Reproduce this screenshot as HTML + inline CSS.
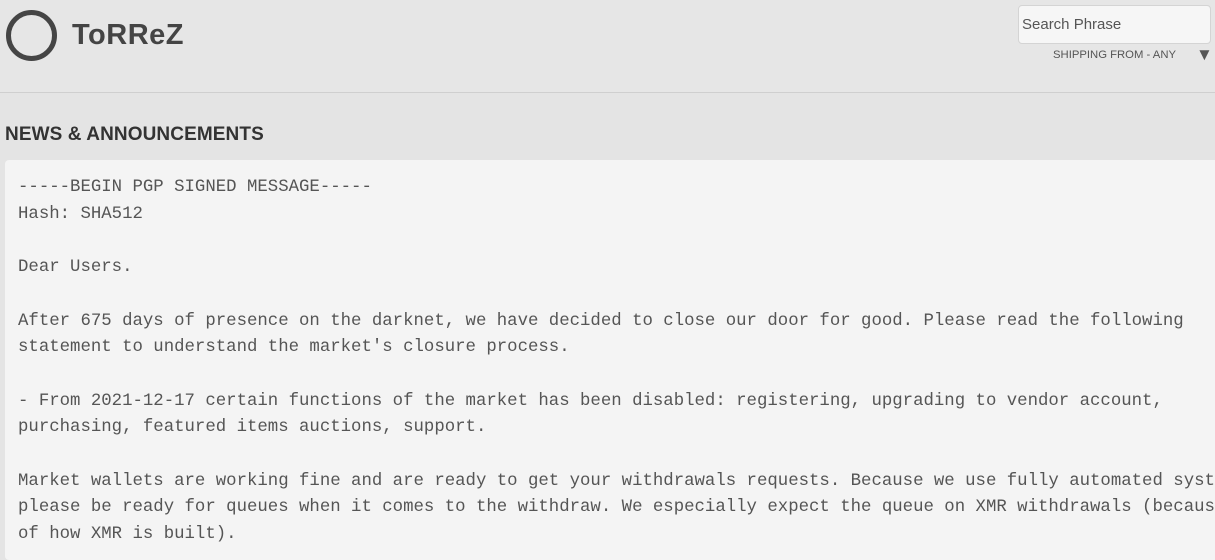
<!DOCTYPE html>
<html><head><style>
body{margin:0;width:1215px;height:548px;overflow:hidden;background:#e4e4e4;font-family:"Liberation Sans",sans-serif;position:relative}
.hdr{position:absolute;left:0;top:0;width:1215px;height:92px;background:#e6e6e6;border-bottom:1px solid #cfcfcf}
.logo{position:absolute;left:6px;top:10px;width:41px;height:41px;border:5px solid #454545;border-radius:50%}
.name{position:absolute;left:72px;top:19px;font-size:29px;color:#444;font-weight:bold;letter-spacing:0.5px}
.search{position:absolute;left:1018px;top:5px;width:193px;height:39px;background:#f6f6f6;border:1px solid #d4d4d4;border-radius:4px;font-size:15px;color:#555;line-height:38px;padding-left:3px;box-sizing:border-box}
.ship{position:absolute;left:1053px;top:49px;font-size:11.3px;color:#555}
.tri{position:absolute;left:1196px;top:45px;font-size:17px;color:#555}
h1{position:absolute;left:5px;top:124px;margin:0;font-size:19px;font-weight:bold;color:#333;letter-spacing:0.1px}
.box{position:absolute;left:5px;top:160px;width:1215px;height:400px;background:#f4f4f4;border-radius:4px}
pre{position:absolute;left:18px;top:175px;margin:0;font-family:"Liberation Mono",monospace;font-size:17.35px;line-height:26.7px;color:#555}
</style></head><body>
<div class="hdr"><div class="logo"></div><div class="name">ToRReZ</div>
<div class="search">Search Phrase</div><div class="ship">SHIPPING FROM - ANY</div><div class="tri">▼</div></div>
<h1>NEWS &amp; ANNOUNCEMENTS</h1>
<div class="box"></div>
<pre>-----BEGIN PGP SIGNED MESSAGE-----
Hash: SHA512

Dear Users.

After 675 days of presence on the darknet, we have decided to close our door for good. Please read the following
statement to understand the market's closure process.

- From 2021-12-17 certain functions of the market has been disabled: registering, upgrading to vendor account,
purchasing, featured items auctions, support.

Market wallets are working fine and are ready to get your withdrawals requests. Because we use fully automated systems,
please be ready for queues when it comes to the withdraw. We especially expect the queue on XMR withdrawals (because
of how XMR is built).</pre>
</body></html>
